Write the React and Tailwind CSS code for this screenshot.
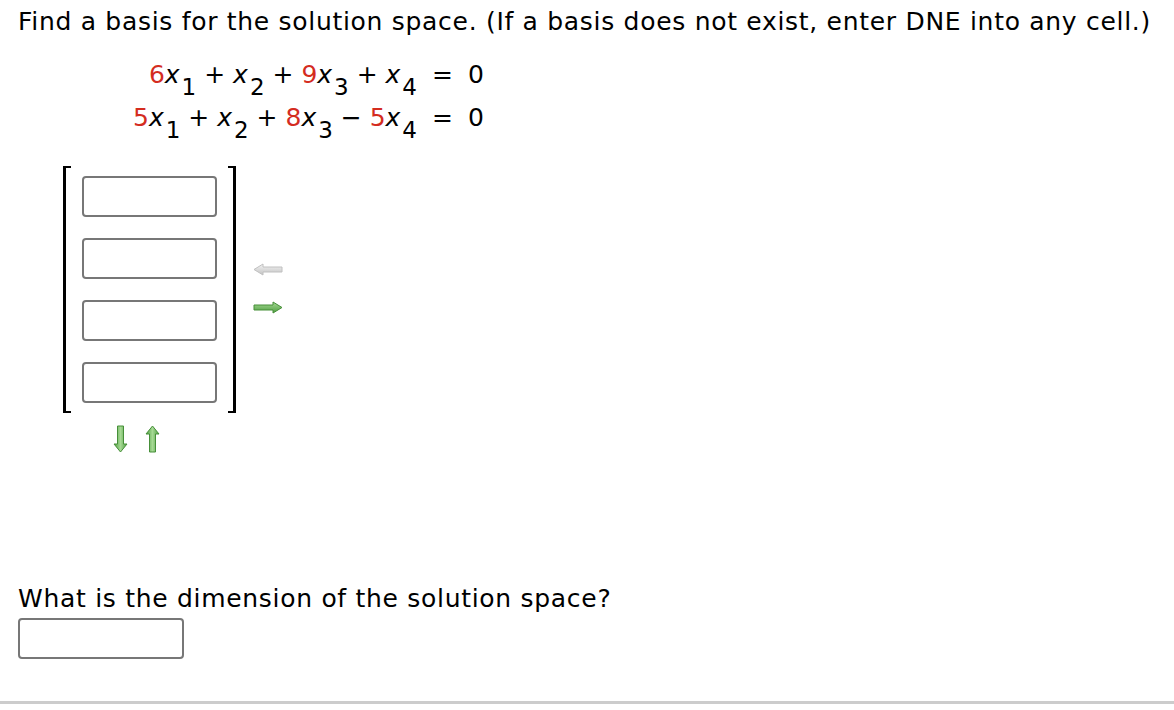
import React from 'react'

const FONT = { fontFamily: '"DejaVu Sans", Verdana, sans-serif' }

function X({ n }) {
  return (
    <span>
      <i>x</i>
      <sub className="ml-[2px] text-[0.92em] align-[-0.28em] leading-none not-italic">{n}</sub>
    </span>
  )
}

function Coef({ v }) {
  return <span className="text-[#d42c1f]">{v}</span>
}

function Cell() {
  return <div className="w-[135px] h-[41px] border-2 border-[#777] rounded-[4px] bg-white" />
}

function HArrow({ dir, color }) {
  const id = `h-${dir}-${color}`
  const fill = color === 'green' ? ['#a6d994', '#4f9e41'] : ['#f4f4f4', '#c2c2c2']
  const stroke = color === 'green' ? '#468f39' : '#c0c0c0'
  const d = dir === 'right'
    ? 'M1 4 H20 V1 L29 6.5 L20 12 V9 H1 Z'
    : 'M29 4 H10 V1 L1 6.5 L10 12 V9 H29 Z'
  return (
    <svg width="30" height="13" viewBox="0 0 30 13">
      <defs>
        <linearGradient id={id} x1="0" y1="0" x2="0" y2="1">
          <stop offset="0" stopColor={fill[0]} />
          <stop offset="1" stopColor={fill[1]} />
        </linearGradient>
      </defs>
      <path d={d} fill={`url(#${id})`} stroke={stroke} strokeWidth="1" />
    </svg>
  )
}

function VArrow({ dir }) {
  const id = `v-${dir}`
  const d = dir === 'down'
    ? 'M4.5 1 V19 H1 L7.5 27 L14 19 H10.5 V1 Z'
    : 'M4.5 27 V9 H1 L7.5 1 L14 9 H10.5 V27 Z'
  return (
    <svg width="15" height="28" viewBox="0 0 15 28">
      <defs>
        <linearGradient id={id} x1="0" y1="0" x2="1" y2="0">
          <stop offset="0" stopColor="#4f9e41" />
          <stop offset="0.5" stopColor="#a6d994" />
          <stop offset="1" stopColor="#4f9e41" />
        </linearGradient>
      </defs>
      <path d={d} fill={`url(#${id})`} stroke="#468f39" strokeWidth="1" />
    </svg>
  )
}

export default function App() {
  return (
    <div className="w-[1174px] h-[710px] bg-white text-black flex flex-col overflow-hidden" style={FONT}>
      <div className="flex-1 pl-[18px] pt-[5px] text-[25px]">
        <p className="leading-[34px] tracking-[0.7px]">
          Find a basis for the solution space. (If a basis does not exist, enter DNE into any cell.)
        </p>

        {/* equations */}
        <div className="mt-[14px] ml-[115px] grid grid-cols-[auto_auto_auto] gap-x-[15px] w-fit leading-[43px]">
          <div className="text-right whitespace-pre"><Coef v="6" /><X n="1" /> + <X n="2" /> + <Coef v="9" /><X n="3" /> + <X n="4" /></div>
          <div>=</div>
          <div>0</div>
          <div className="text-right whitespace-pre"><Coef v="5" /><X n="1" /> + <X n="2" /> + <Coef v="8" /><X n="3" /> − <Coef v="5" /><X n="4" /></div>
          <div>=</div>
          <div>0</div>
        </div>

        {/* basis vector */}
        <div className="mt-[27px] ml-[45px] flex items-center">
          <div className="relative px-[19px] py-[10px] flex flex-col gap-[21px]">
            <div className="absolute left-0 top-0 bottom-0 w-[8px] border-l-[3px] border-t-2 border-b-2 border-black" />
            <div className="absolute right-0 top-0 bottom-0 w-[8px] border-r-[3px] border-t-2 border-b-2 border-black" />
            <Cell />
            <Cell />
            <Cell />
            <Cell />
          </div>
          <div className="ml-[17px] flex flex-col gap-[25px] mt-[-2px]">
            <HArrow dir="left" color="gray" />
            <HArrow dir="right" color="green" />
          </div>
        </div>
        <div className="ml-[95px] mt-[12px] flex gap-[17px]">
          <VArrow dir="down" />
          <VArrow dir="up" />
        </div>

        <p className="mt-[129px] leading-[34px] tracking-[0.7px]">What is the dimension of the solution space?</p>
        <div className="mt-[2px] w-[166px] h-[41px] border-2 border-[#777] rounded-[4px]" />
      </div>
      <div className="h-[3px] bg-[#cccccc] mb-[6px]" />
    </div>
  )
}
